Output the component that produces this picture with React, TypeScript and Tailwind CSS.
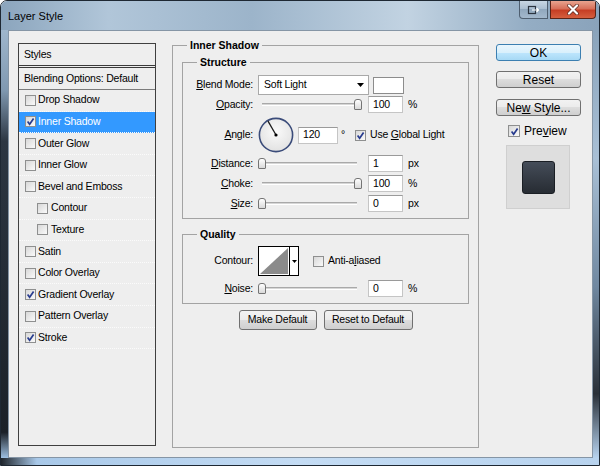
import React from 'react';

function Check({ on, big }: { on?: boolean; big?: boolean }) {
  return (
    <span
      className={
        (big ? 'w-[12px] h-[12px] ' : 'w-[11px] h-[11px] ') +
        'shrink-0 border border-[#8e8f8f] bg-gradient-to-br from-[#d8d8d8] to-[#fafafa] flex items-center justify-center'
      }
    >
      {on && (
        <svg width="9" height="9" viewBox="0 0 9 9">
          <path d="M1.6 4.6 L3.6 7.2 L7.6 1.4" stroke="#283c8f" strokeWidth="1.7" fill="none" />
        </svg>
      )}
    </span>
  );
}

function Slider({ max }: { max?: boolean }) {
  return (
    <div className="relative w-[104px] h-[17px] ml-[5px] shrink-0">
      <div className="absolute left-[4px] right-[5px] top-[7px] h-[3px] border-t border-t-[#a9a9a9] border-b border-b-white bg-[#d6d6d6]" />
      <div
        className={
          (max ? 'right-[0px] ' : 'left-[0px] ') +
          'absolute top-[3px] w-[8px] h-[11px] rounded-t-[3px] rounded-b-[1px] border border-[#747474] bg-gradient-to-b from-white to-[#d9d9d9]'
        }
      />
    </div>
  );
}

function Field({ value, w = 'w-[35px]', ml = 'ml-[6px]' }: { value: string; w?: string; ml?: string }) {
  return (
    <div className={`${w} ${ml} h-[17px] shrink-0 bg-white border border-[#c5c5c5] border-t-[#9a9a9a] flex items-center pl-[4px]`}>
      {value}
    </div>
  );
}

function Label({ children }: { children: React.ReactNode }) {
  return <span className="w-[70px] shrink-0 text-right">{children}</span>;
}

function SliderRow({ label, value, unit, max, className }: { label: React.ReactNode; value: string; unit: string; max?: boolean; className: string }) {
  return (
    <div className={`flex items-center h-[17px] ${className}`}>
      <Label>{label}</Label>
      <Slider max={max} />
      <Field value={value} />
      <span className="ml-[5px]">{unit}</span>
    </div>
  );
}

function WinButton({ children, primary, className = '' }: { children: React.ReactNode; primary?: boolean; className?: string }) {
  return (
    <div
      className={
        (primary
          ? 'border-[#3c7fb1] bg-[linear-gradient(#eaf6fd,#d9f0fc_50%,#bee6fd_50%,#a7d9f5)] '
          : 'border-[#707070] bg-[linear-gradient(#f2f2f2,#ebebeb_50%,#dddddd_50%,#cfcfcf)] ') +
        'border rounded-[3px] flex items-center justify-center text-black ' +
        className
      }
    >
      {children}
    </div>
  );
}

const styleRows: { name: string; on?: boolean; sel?: boolean; sub?: boolean }[] = [
  { name: 'Drop Shadow' },
  { name: 'Inner Shadow', on: true, sel: true },
  { name: 'Outer Glow' },
  { name: 'Inner Glow' },
  { name: 'Bevel and Emboss' },
  { name: 'Contour', sub: true },
  { name: 'Texture', sub: true },
  { name: 'Satin' },
  { name: 'Color Overlay' },
  { name: 'Gradient Overlay', on: true },
  { name: 'Pattern Overlay' },
  { name: 'Stroke', on: true },
];

export default function App() {
  return (
    <div className="w-[600px] h-[466px] overflow-hidden rounded-t-[7px] border border-[#1e2833] flex flex-col font-['Liberation_Sans',Arial,sans-serif] text-[10.5px] tracking-[-0.2px] text-black">
      {/* title bar */}
      <div className="h-[29px] shrink-0 flex items-start pl-[7px] bg-[linear-gradient(to_right,#8ba5bd_0%,#b1c6d9_18%,#9cb4ca_42%,#c2d3e2_68%,#94adc4_88%,#8aa3bb_100%)]">
        <span className="pt-[7px] text-[11px] tracking-normal">Layer Style</span>
        <div className="ml-auto mr-[3px] flex gap-[2px]">
          <div className="w-[29px] h-[18px] rounded-bl-[4px] border border-t-0 border-[#4f5f70] bg-[linear-gradient(#c8d6e3,#a9bccf_50%,#91a8be_50%,#a3b8cc)] flex items-center justify-center">
            <svg width="13" height="10" viewBox="0 0 13 10">
              <rect x="1.5" y="1.5" width="7" height="7" fill="none" stroke="#2b3440" strokeWidth="1.2" />
              <path d="M5 5 H11.5 M9.5 3 L11.5 5 L9.5 7" stroke="#fff" strokeWidth="1.2" fill="none" />
            </svg>
          </div>
          <div className="w-[46px] h-[18px] rounded-br-[4px] border border-t-0 border-[#5a2418] bg-[linear-gradient(#e9a48f,#d7705a_45%,#c63e24_55%,#d55f3f)] flex items-center justify-center">
            <svg width="14" height="11" viewBox="0 0 14 11">
              <path d="M3 1.5 L11 9.5 M11 1.5 L3 9.5" stroke="#5b2a20" strokeWidth="3.6" strokeLinecap="round" />
              <path d="M3 1.5 L11 9.5 M11 1.5 L3 9.5" stroke="#fff" strokeWidth="2.2" strokeLinecap="round" />
            </svg>
          </div>
        </div>
      </div>

      <div className="flex h-[428px] shrink-0">
        {/* left frame */}
        <div className="w-[7px] bg-[linear-gradient(#9fb6cc_0%,#8099b1_14%,#2c3642_26%,#1b2128_94%,#9ec0e2_100%)]" />

        {/* dialog body */}
        <div className="w-[585px] bg-[#eeeeee] border border-[#8595a5] flex items-start pl-[9px]">
          {/* styles list */}
          <div className="mt-[12px] w-[138px] h-[403px] shrink-0 border border-[#3f3f3f] flex flex-col">
            <div className="h-[24px] shrink-0 flex items-center pl-[5px] border-b-[3px] border-double border-[#3a3a3a]">Styles</div>
            <div className="h-[22px] shrink-0 flex items-center pl-[5px] border-b border-[#7b7b7b]">Blending Options: Default</div>
            {styleRows.map((r) => (
              <div
                key={r.name}
                className={
                  (r.sel ? 'bg-[#3399ff] text-white ' : '') +
                  (r.sub ? 'pl-[18px] ' : 'pl-[6px] ') +
                  'h-[21.6px] shrink-0 flex items-center border-b border-dotted border-[#fbfbfb]'
                }
              >
                <Check on={r.on} />
                <span className={r.sub ? 'ml-[3px]' : 'ml-[2px]'}>{r.name}</span>
              </div>
            ))}
          </div>

          {/* inner shadow group */}
          <fieldset className="ml-[16px] mt-[8px] w-[307px] h-[409px] shrink-0 border border-[#a3a3a3] p-0 min-w-0">
            <legend className="ml-[14px] px-[3px] font-bold leading-[13px] tracking-normal">Inner Shadow</legend>
            <div className="px-[9px]">
              <fieldset className="mt-[4px] border border-[#a3a3a3] p-0 min-w-0">
                <legend className="ml-[14px] px-[3px] font-bold leading-[13px] tracking-normal">Structure</legend>
                <div className="pb-[6px]">
                  <div className="mt-[6px] flex items-center h-[20px]">
                    <Label>
                      <u>B</u>lend Mode:
                    </Label>
                    <div className="ml-[5px] w-[111px] h-[20px] border border-[#a9a9a9] bg-white flex items-center pl-[5px] pr-[4px]">
                      <span className="flex-1">Soft Light</span>
                      <svg width="7" height="4" viewBox="0 0 7 4">
                        <path d="M0 0 H7 L3.5 4 Z" fill="#000" />
                      </svg>
                    </div>
                    <div className="ml-[4px] w-[31px] h-[17px] border border-[#8c8c8c] bg-white" />
                  </div>
                  <SliderRow label={<><u>O</u>pacity:</>} value="100" unit="%" max className="mt-[1px]" />
                  <div className="mt-[4px] flex items-center h-[36px]">
                    <Label>
                      <u>A</u>ngle:
                    </Label>
                    <svg className="ml-[5px] shrink-0" width="36" height="36" viewBox="0 0 36 36">
                      <defs>
                        <radialGradient id="dial" cx="50%" cy="40%" r="60%">
                          <stop offset="0%" stopColor="#fafafa" />
                          <stop offset="100%" stopColor="#e2e2e2" />
                        </radialGradient>
                      </defs>
                      <circle cx="18" cy="18" r="16.6" fill="url(#dial)" stroke="#3b4c7a" strokeWidth="1.6" />
                      <path d="M18 18 L10 4.2" stroke="#1c1c1c" strokeWidth="1.3" />
                      <circle cx="18" cy="18" r="1.6" fill="#000" />
                    </svg>
                    <Field value="120" w="w-[40px]" ml="ml-[4px]" />
                    <span className="w-[17px] pl-[3px] shrink-0">°</span>
                    <Check on />
                    <span className="ml-[4px]">
                      Use <u>G</u>lobal Light
                    </span>
                  </div>
                  <SliderRow label={<><u>D</u>istance:</>} value="1" unit="px" className="mt-[2px]" />
                  <SliderRow label={<><u>C</u>hoke:</>} value="100" unit="%" max className="mt-[3px]" />
                  <SliderRow label={<><u>S</u>ize:</>} value="0" unit="px" className="mt-[3px]" />
                </div>
              </fieldset>

              <fieldset className="mt-[9px] border border-[#a3a3a3] p-0 min-w-0">
                <legend className="ml-[14px] px-[3px] font-bold leading-[13px] tracking-normal">Quality</legend>
                <div className="pb-[6px]">
                  <div className="mt-[5px] flex items-center h-[30px]">
                    <Label>Contour:</Label>
                    <div className="ml-[5px] w-[41px] h-[30px] shrink-0 border border-black bg-white flex">
                      <svg width="30" height="28" viewBox="0 0 30 28">
                        <polygon points="1,27 29,1 29,27" fill="#8b8b8b" />
                      </svg>
                      <div className="flex-1 border-l border-black flex items-center justify-center">
                        <svg width="5" height="3" viewBox="0 0 5 3">
                          <path d="M0 0 H5 L2.5 3 Z" fill="#000" />
                        </svg>
                      </div>
                    </div>
                    <span className="ml-[14px]">
                      <Check />
                    </span>
                    <span className="ml-[4px]">
                      Anti-a<u>l</u>iased
                    </span>
                  </div>
                  <SliderRow label={<><u>N</u>oise:</>} value="0" unit="%" className="mt-[4px]" />
                </div>
              </fieldset>

              <div className="mt-[6px] flex justify-center gap-[7px]">
                <WinButton className="w-[78px] h-[20px]">Make Default</WinButton>
                <WinButton className="w-[89px] h-[20px]">Reset to Default</WinButton>
              </div>
            </div>
          </fieldset>

          {/* right column */}
          <div className="ml-[17px] mt-[13px] w-[85px] shrink-0 flex flex-col text-[12px] tracking-normal">
            <WinButton primary className="h-[17px]">OK</WinButton>
            <WinButton className="mt-[10px] h-[17px]">Reset</WinButton>
            <WinButton className="mt-[11px] h-[17px]">
              Ne<u>w</u>&nbsp;Style...
            </WinButton>
            <div className="mt-[9px] ml-[12px] flex items-center h-[12px]">
              <Check on big />
              <span className="ml-[4px]">
                Pre<u>v</u>iew
              </span>
            </div>
            <div className="mt-[8px] ml-[10px] w-[64px] h-[64px] border border-[#cfcfcf] bg-[#dedede] flex items-center justify-center">
              <div className="w-[33px] h-[33px] rounded-[3px] border border-[#1a1e24] bg-gradient-to-b from-[#454d59] to-[#272c33]" />
            </div>
          </div>
        </div>

        {/* right frame */}
        <div className="w-[6px] bg-[linear-gradient(#8aa3ba_0%,#a9c0d6_30%,#7088a0_60%,#2a3038_85%,#b7d3ef_100%)]" />
      </div>

      {/* bottom frame */}
      <div className="h-[7px] shrink-0 bg-[linear-gradient(to_right,#1f252c_0%,#a8c8e8_6%,#c4dcf4_50%,#b8d3ee_100%)]" />
    </div>
  );
}
